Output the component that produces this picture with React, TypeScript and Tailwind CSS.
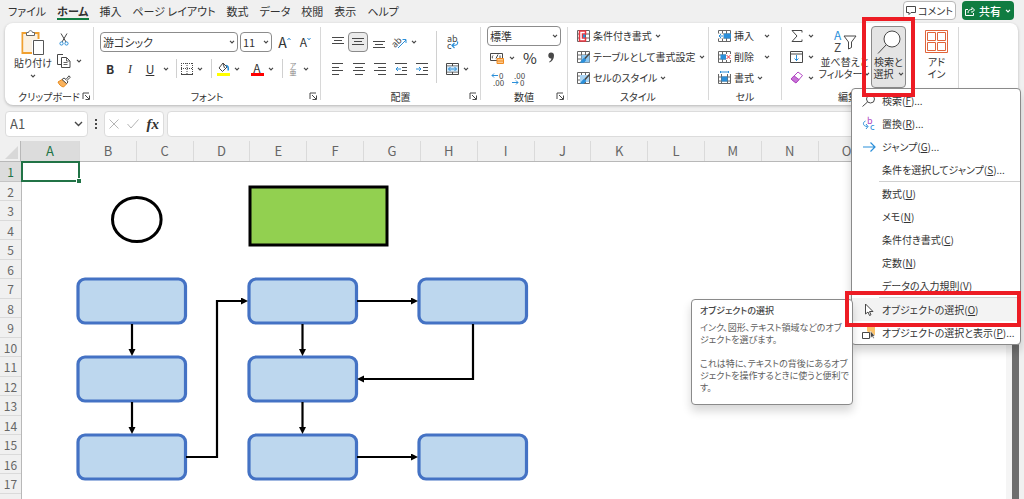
import React from "react";

const DARK = "#484848";
const BLUE = "#2b8fd9";

const COLUMNS = ["B", "C", "D", "E", "F", "G", "H", "I", "J", "K", "L", "M", "N", "O", "P", "Q"];
const ROWS = Array.from({ length: 17 }, (_, i) => i + 1);

const TABS = ["ファイル", "ホーム", "挿入", "ページ レイアウト", "数式", "データ", "校閲", "表示", "ヘルプ"];

interface IconProps {
  w: number;
  h: number;
  box?: string;
  children: React.ReactNode;
}

function Icon({ w, h, box, children }: IconProps) {
  return (
    <svg
      width={w}
      height={h}
      viewBox={box ?? `0 0 ${w} ${h}`}
      fill="none"
      stroke={DARK}
      strokeWidth="1"
      className="shrink-0 overflow-visible"
      aria-hidden="true"
    >
      {children}
    </svg>
  );
}

function Chevron({ color = DARK }: { color?: string }) {
  return (
    <Icon w={6} h={4}>
      <path d="M1 .8l2 2 2-2" stroke={color} strokeWidth="1.2" />
    </Icon>
  );
}

function DropButton({ label, className = "w-[14px]" }: { label: string; className?: string }) {
  return (
    <button aria-label={label} className={`${className} flex h-4 shrink-0 items-center justify-center`}>
      <Chevron />
    </button>
  );
}

function Tool({ label, className = "w-[21px]", children }: { label: string; className?: string; children: React.ReactNode }) {
  return (
    <button aria-label={label} className={`${className} flex h-[19px] shrink-0 items-center justify-center`}>
      {children}
    </button>
  );
}

function SelectBox({ label, value, className }: { label: string; value: string; className: string }) {
  return (
    <div className={`${className} relative flex h-[20px] shrink-0 items-center rounded border border-[#8c8c8c] bg-white`}>
      <select aria-label={label} defaultValue={value} className="h-full w-full appearance-none bg-transparent pl-0.5 text-[11px] leading-4 outline-none">
        <option>{value}</option>
      </select>
      <span className="pointer-events-none absolute right-0.5 flex h-full items-center">
        <Chevron />
      </span>
    </div>
  );
}

function Launcher() {
  return (
    <button aria-label="詳細設定" className="absolute right-[3px] bottom-1">
      <Icon w={8} h={8}>
        <path d="M1 7V1h6M3 3l4 4M7.500 3.500v4h-4" />
      </Icon>
    </button>
  );
}

interface GroupProps {
  name: string;
  className: string;
  launcher?: boolean;
  children: React.ReactNode;
}

function Group({ name, className, launcher, children }: GroupProps) {
  return (
    <>
      <section className={`${className} relative flex shrink-0 flex-col`}>
        <div className="h-[63px]">{children}</div>
        <h2 className="text-center text-[10px] leading-[14px]">{name}</h2>
        {launcher && <Launcher />}
      </section>
      <div className="h-[73px] w-px shrink-0 bg-[#d8d8d8]" />
    </>
  );
}

function Divider({ className = "mx-1 h-[19px]" }: { className?: string }) {
  return <div className={`${className} w-px shrink-0 bg-[#d0d0d0]`} />;
}

function AlignIcon({ lines }: { lines: number[][] }) {
  return (
    <Icon w={12} h={12}>
      {lines.map(([x, y, len]) => (
        <path key={y} d={`M${x} ${y}.5h${len}`} />
      ))}
    </Icon>
  );
}

/* small worksheet used under most of the style / cell icons */
function GridBase() {
  return <path d="M.5.5h12v11H.5zM.5 4h12M.5 8h12M4.500.5v11M8.500.5v11" stroke="#666" />;
}

function ClipboardGroup() {
  return (
    <Group name="クリップボード" className="w-[88px]" launcher>
      <div className="flex pt-[3px] pl-[9px]">
        <button className="flex w-[38px] flex-col items-center text-[10px] leading-[14px] whitespace-nowrap">
          <Icon w={24} h={25}>
            <path d="M5 3H1.500v20H11" stroke="#f0a030" strokeWidth="2" />
            <path d="M2.500 4h14v6H11v12H2.500z" fill="#fbf1e2" stroke="none" />
            <path d="M13 3h4.500v6" stroke="#f0a030" strokeWidth="2" />
            <path d="M5.500 5.500v-3H7.500c.3-2.500 3.700-2.500 4 0h2v3z" fill="#fff" stroke="#666" />
            <path d="M12.500 10.500h10v14h-10z" fill="#fff" stroke="#555" />
          </Icon>
          <span className="mt-px">貼り付け</span>
          <span className="flex h-3 items-center"><Chevron /></span>
        </button>
        <div className="flex flex-col gap-0.5 pl-1">
          <Tool label="切り取り" className="w-[16px]">
            <Icon w={10} h={13}>
              <path d="M2 .5l5 8.500M8 .5L3 9" />
              <circle cx="2.500" cy="10.500" r="1.600" stroke={BLUE} />
              <circle cx="7.500" cy="10.500" r="1.600" stroke={BLUE} />
            </Icon>
          </Tool>
          <div className="flex items-center">
            <Tool label="コピー" className="w-[16px]">
              <Icon w={14} h={14}>
                <path d="M5 10.500H.5V.5H6M4.500 3.500h5l3.500 3.500v6.500H4.500z" fill="#fff" />
                <path d="M9.500 3.500V7H13M6.500 8.500h4M6.500 10.500h4" stroke="#666" />
              </Icon>
            </Tool>
            <DropButton label="コピーのオプション" />
          </div>
          <Tool label="書式のコピー" className="w-[16px]">
            <Icon w={14} h={13}>
              <path d="M1 7l4-2.500 5 4L6.500 12C4 11.500 2 9.500 1 7z" fill="#f9b25c" stroke="#e88a1c" />
              <path d="M5 4.500L7 3l2 1.500L12 .8l1.300 1.400L10 5.500 11 7l-1.500 1.500z" fill="#fff" />
            </Icon>
          </Tool>
        </div>
      </div>
    </Group>
  );
}

function FontGroup() {
  return (
    <Group name="フォント" className="w-[226px]" launcher>
      <div className="flex flex-col gap-[7px] pt-[5px] pl-1.5">
        <div className="flex items-center">
          <SelectBox label="フォント名" value="游ゴシック" className="w-[138px]" />
          <SelectBox label="フォント サイズ" value="11" className="ml-0.5 w-[32px]" />
          <Tool label="フォント サイズの拡大" className="ml-0.5 w-[21px]">
            <span className="text-[14px] leading-4">A</span>
            <Icon w={4} h={10}><path d="M.5 3L2 1.200 3.500 3" stroke={BLUE} /></Icon>
          </Tool>
          <Tool label="フォント サイズの縮小">
            <span className="text-[12px] leading-4">A</span>
            <Icon w={4} h={10}><path d="M.5 1L2 2.800 3.500 1" stroke={BLUE} /></Icon>
          </Tool>
        </div>
        <div className="flex items-center text-[12px] leading-4">
          <Tool label="太字" className="w-[20px]"><b>B</b></Tool>
          <Tool label="斜体" className="w-[20px]"><i className="font-['Liberation_Serif',serif]">I</i></Tool>
          <Tool label="下線" className="w-[20px]"><u>U</u></Tool>
          <DropButton label="下線の種類" className="w-[12px]" />
          <Divider />
          <Tool label="罫線" className="w-[12px]">
            <Icon w={12} h={12}>
              <path d="M.5 0v11M6 0v11M11.500 0v11M0 .5h12M0 5.500h12" strokeDasharray="1 1" />
              <path d="M0 11.500h12" />
            </Icon>
          </Tool>
          <DropButton label="罫線の種類" />
          <Divider />
          <Tool label="塗りつぶしの色" className="w-[14px]">
            <Icon w={13} h={14}>
              <path d="M6 1L2 6l3.500 3.500L10 5z" fill="#fff" />
              <path d="M6 1.500L7.500 6" />
              <path d="M9 3.500c2 0 2.500 2 2.200 5" stroke={BLUE} strokeWidth="1.600" />
              <path d="M0 12.500h13" stroke="#ffff00" strokeWidth="3" />
            </Icon>
          </Tool>
          <DropButton label="塗りつぶしの色を選択" />
          <Tool label="フォントの色" className="ml-1.5 w-[14px]">
            <span className="flex flex-col items-center">
              <span className="h-[11px] text-[12px] leading-[11px]">A</span>
              <span className="h-[3px] w-[13px] bg-[#f00]" />
            </span>
          </Tool>
          <DropButton label="フォントの色を選択" />
          <Divider />
          <Tool label="ふりがな" className="w-[12px]">
            <span className="flex flex-col text-[7px] leading-[7px] text-[#888]"><span>ア</span><span>亜</span></span>
          </Tool>
          <DropButton label="ふりがなの設定" />
        </div>
      </div>
    </Group>
  );
}

function AlignGroup() {
  return (
    <Group name="配置" className="w-[159px]" launcher>
      <div className="flex pl-1.5">
        <div className="flex flex-col gap-[7px] pt-[5px]">
          <div className="flex items-center">
            <Tool label="上揃え"><AlignIcon lines={[[0, 1, 12], [2, 4, 8], [0, 7, 12]]} /></Tool>
            <button aria-label="上下中央揃え" aria-pressed="true" className="flex h-[20px] w-[20px] items-center justify-center rounded border border-[#8a8a8a] bg-[#ebebeb]">
              <AlignIcon lines={[[0, 2, 12], [2, 5, 8], [0, 8, 12]]} />
            </button>
            <Tool label="下揃え"><AlignIcon lines={[[0, 5, 12], [2, 8, 8], [0, 11, 12]]} /></Tool>
            <Tool label="方向">
              <Icon w={14} h={13}>
                <text x="-2" y="9" fontSize="9" fill={DARK} stroke="none" transform="rotate(-45 4 6)">ab</text>
                <path d="M5 12l8-8M9.500 3.500H13V7" stroke={BLUE} />
              </Icon>
            </Tool>
            <DropButton label="方向の設定" className="w-[8px]" />
          </div>
          <div className="flex items-center">
            <Tool label="左揃え"><AlignIcon lines={[[0, 0, 11], [0, 4, 7], [0, 7, 11], [0, 11, 7]]} /></Tool>
            <Tool label="中央揃え"><AlignIcon lines={[[0, 0, 12], [2, 4, 8], [0, 7, 12], [2, 11, 8]]} /></Tool>
            <Tool label="右揃え"><AlignIcon lines={[[0, 0, 12], [4, 4, 8], [0, 7, 12], [4, 11, 8]]} /></Tool>
            <Tool label="インデントを減らす">
              <Icon w={12} h={12}>
                <path d="M0 .5h12M7 4.500h5M7 7.500h5M0 11.500h12" />
                <path d="M6 6H1M3 4L1 6l2 2" stroke={BLUE} />
              </Icon>
            </Tool>
            <Tool label="インデントを増やす">
              <Icon w={12} h={12}>
                <path d="M0 .5h12M7 4.500h5M7 7.500h5M0 11.500h12" />
                <path d="M0 6h5M3 4l2 2-2 2" stroke={BLUE} />
              </Icon>
            </Tool>
          </div>
        </div>
        <Divider className="mt-1 ml-1 h-[52px]" />
        <div className="flex flex-col gap-2 pt-[5px] pl-1.5">
          <Tool label="折り返して全体を表示する" className="w-[18px]">
            <Icon w={13} h={14}>
              <text x="1" y="7" fontSize="9" fill={DARK} stroke="none">ab</text>
              <text x="1" y="14" fontSize="9" fill={DARK} stroke="none">c</text>
              <path d="M11.500 6.500c1 3-1 4-5 4M8.500 8l-2.500 2.500L8.500 13" stroke={BLUE} strokeWidth="1.200" />
            </Icon>
          </Tool>
          <div className="flex items-center">
            <Tool label="セルを結合して中央揃え" className="w-[18px]">
              <Icon w={13} h={12}>
                <path d="M.5.5h12v11H.5zM.5 3h12M.5 9h12M6.500.5V3M6.500 9v2.500" />
                <path d="M1 3.500h11v5H1z" fill="#cfe7f9" stroke="none" />
                <path d="M2.500 6h8M4.500 4l-2 2 2 2M8.500 4l2 2-2 2" stroke={BLUE} />
              </Icon>
            </Tool>
            <DropButton label="結合の設定" className="w-[10px]" />
          </div>
        </div>
      </div>
    </Group>
  );
}

function NumberGroup() {
  return (
    <Group name="数値" className="w-[86px]" launcher>
      <div className="-mt-px flex flex-col pl-1.5">
        <SelectBox label="表示形式" value="標準" className="w-[74px]" />
        <div className="flex h-[23px] items-center">
          <Tool label="通貨表示形式" className="w-[19px]">
            <Icon w={14} h={12}>
              <path d="M.5 1.500h12v7H.5z" />
              <path d="M3 3.500c-1 1-1 2.500 0 3M6 6.500l2-4M10 3.500v3" />
              <path d="M7 6.500h6.500v5H7z" fill="#fdc98a" stroke="#ee8a22" />
              <path d="M7 9h6.500" stroke="#ee8a22" />
            </Icon>
          </Tool>
          <DropButton label="通貨の種類" className="w-[12px]" />
          <Tool label="パーセント スタイル" className="w-[24px]"><span className="text-[15px] leading-4">%</span></Tool>
          <Tool label="桁区切りスタイル" className="w-[18px]">
            <Icon w={8} h={11}>
              <path d="M4 .5c2 0 3 1.200 3 3.200C7 7 5 9.500 2.500 10.500L2 9.800C3.500 9 4.300 7.800 4.400 6.500 2.500 6.800 1.300 5.500 1.300 3.600 1.300 1.800 2.400.5 4 .5z" fill={DARK} stroke="none" />
            </Icon>
          </Tool>
        </div>
        <div className="flex h-[19px] items-center">
          <Tool label="小数点以下の表示桁数を増やす">
            <Icon w={13} h={14}>
              <path d="M7 3.500H1M3 1.500l-2 2 2 2" stroke={BLUE} />
              <text x="8" y="7" fontSize="8" fill={DARK} stroke="none">0</text>
              <text x="2" y="14" fontSize="8" fill={DARK} stroke="none">.00</text>
            </Icon>
          </Tool>
          <Tool label="小数点以下の表示桁数を減らす">
            <Icon w={13} h={14}>
              <text x="2" y="7" fontSize="8" fill={DARK} stroke="none">.00</text>
              <path d="M0 10.500h6M4 8.500l2 2-2 2" stroke={BLUE} />
              <text x="8" y="14" fontSize="8" fill={DARK} stroke="none">0</text>
            </Icon>
          </Tool>
        </div>
      </div>
    </Group>
  );
}

function MenuButton({ icon, label, spread }: { icon: React.ReactNode; label: string; spread?: boolean }) {
  return (
    <button className="flex h-[21px] items-center text-[10px] leading-4 whitespace-nowrap">
      {icon}
      <span className="ml-[3px]">{label}</span>
      <span className={spread ? "ml-2.5" : "ml-[3px]"}><Chevron /></span>
    </button>
  );
}

function StyleGroup() {
  return (
    <Group name="スタイル" className="w-[140px]">
      <div className="-mt-0.5 flex flex-col pl-[9px]">
        <MenuButton
          label="条件付き書式"
          icon={
            <Icon w={13} h={12}>
              <GridBase />
              <path d="M2.500 1h6v3h-3v4h3v3h-6z" fill="#fff" stroke="#e8343f" strokeWidth="1.500" />
              <path d="M6 4.500h2v3H6z" fill={BLUE} stroke="none" />
            </Icon>
          }
        />
        <MenuButton
          label="テーブルとして書式設定"
          icon={
            <Icon w={13} h={12}>
              <GridBase />
              <path d="M4.500 4h8v7.500h-8z" fill="#8cc6f0" stroke="none" />
              <path d="M12.500 2.500L7 8.500" strokeWidth="1.600" />
              <path d="M7.500 7.500c-2 0-2 2.500-4 3.500 2.500 1 5 0 5-2.500z" fill={BLUE} stroke={BLUE} />
            </Icon>
          }
        />
        <MenuButton
          label="セルのスタイル"
          icon={
            <Icon w={13} h={12}>
              <GridBase />
              <path d="M3 3h9v7H3z" fill="#a9d3f2" stroke="none" />
              <path d="M12.500 2.500L7 8.500" strokeWidth="1.600" />
              <path d="M7.500 7.500c-2 0-2 2.500-4 3.500 2.500 1 5 0 5-2.500z" fill={BLUE} stroke={BLUE} />
            </Icon>
          }
        />
      </div>
    </Group>
  );
}

function CellGroup() {
  return (
    <Group name="セル" className="w-[72px]">
      <div className="-mt-0.5 flex flex-col pl-[9px]">
        <MenuButton
          label="挿入"
          spread
          icon={
            <Icon w={13} h={12}>
              <GridBase />
              <path d="M0 3.500h5v5H0z" fill="#fff" stroke="none" />
              <path d="M6 3.500h7v5H6z" fill={BLUE} stroke="none" />
              <path d="M7 6H1M3 4L1 6l2 2" stroke={BLUE} />
            </Icon>
          }
        />
        <MenuButton
          label="削除"
          spread
          icon={
            <Icon w={13} h={12}>
              <GridBase />
              <path d="M2.500 3.500h6v5h-6z" fill={BLUE} stroke="none" />
              <path d="M8 3h5v6H8z" fill="#fff" stroke="none" />
              <path d="M8.500 4l4 4M12.500 4l-4 4" stroke="#e8343f" />
            </Icon>
          }
        />
        <MenuButton
          label="書式"
          icon={
            <Icon w={13} h={13}>
              <path d="M.5 3v9.500h12V3M.5 6h12M.5 10h12M3.500 3v9.500M9.500 3v9.500" stroke="#666" />
              <path d="M3.500 5.500h6v5h-6z" fill={BLUE} stroke="none" />
              <path d="M2.500 1h8M2.500 0v2M10.500 0v2" stroke={BLUE} />
            </Icon>
          }
        />
      </div>
    </Group>
  );
}

function TooltipCard() {
  return (
    <div
      role="tooltip"
      className="absolute top-[210px] right-[167px] h-[106px] w-[162px] rounded border border-[#8a8a8a] bg-white pt-1 pl-2 text-[9px] leading-[12px] whitespace-nowrap text-[#606060] shadow-[0_6px_10px_rgba(0,0,0,0.16)]"
    >
      <p className="mb-1 leading-[14px] font-medium text-[#444]">オブジェクトの選択</p>
      <p>
        インク、図形、テキスト領域などのオブ
        <br />
        ジェクトを選びます。
      </p>
      <p className="mt-3">
        これは特に、テキストの背後にあるオブ
        <br />
        ジェクトを操作するときに使うと便利で
        <br />
        す。
      </p>
    </div>
  );
}

interface MenuEntry {
  label: string;
  accel: string;
  more?: boolean;
  icon?: React.ReactNode;
  lineAbove?: boolean;
  marked?: boolean;
}

const ENTRIES: MenuEntry[] = [
  {
    label: "検索",
    accel: "F",
    more: true,
    icon: <Icon w={14} h={13}><circle cx="8.500" cy="5" r="4" /><path d="M5.500 8L.5 12.500" /></Icon>,
  },
  {
    label: "置換",
    accel: "R",
    more: true,
    icon: (
      <Icon w={14} h={14}>
        <text x="5" y="7" fontSize="9" fill="#b146c2" stroke="none">b</text>
        <text x="8" y="13" fontSize="9" fill={BLUE} stroke="none">c</text>
        <path d="M3.500 4C.5 5 .5 9.500 5.500 9.500M4 7l2 2.500L4 12" stroke={BLUE} />
      </Icon>
    ),
  },
  {
    label: "ジャンプ",
    accel: "G",
    more: true,
    icon: <Icon w={14} h={12}><path d="M1 6h12M8.500 1.500L13 6l-4.500 4.500" stroke={BLUE} strokeWidth="1.200" /></Icon>,
  },
  { label: "条件を選択してジャンプ", accel: "S", more: true },
  { label: "数式", accel: "U", lineAbove: true },
  { label: "メモ", accel: "N" },
  { label: "条件付き書式", accel: "C" },
  { label: "定数", accel: "N" },
  { label: "データの入力規則", accel: "V" },
  {
    label: "オブジェクトの選択",
    accel: "O",
    lineAbove: true,
    marked: true,
    icon: <Icon w={10} h={14}><path d="M1.500 1v10l2.500-2 1.500 3.500 1.500-.7L5.500 8.500H9z" fill="#fff" /></Icon>,
  },
  {
    label: "オブジェクトの選択と表示",
    accel: "P",
    more: true,
    icon: (
      <Icon w={14} h={14}>
        <path d="M5 0h8v9H9L5 5z" fill="#fbc26a" stroke="none" />
        <path d="M.5 6.500h7v6h-7z" fill="#fff" />
        <path d="M8.500 5v7l1.800-1.500 1 2 1-.5-1-2H13z" fill={DARK} stroke="#fff" strokeWidth=".5" />
      </Icon>
    ),
  },
];

function FindMenu() {
  return (
    <div
      role="menu"
      className="absolute top-[61px] left-[-20px] w-[170px] rounded border border-[#8a8a8a] bg-white shadow-[0_6px_10px_rgba(0,0,0,0.18)]"
    >
      {ENTRIES.map((e) => (
        <div key={e.label} className="relative">
          {e.lineAbove && <div className="ml-[27px] h-px bg-[#d0d0d0]" />}
          <button
            role="menuitem"
            className={`flex h-[23px] w-full items-center text-[10px] leading-4 whitespace-nowrap ${e.marked ? "bg-[#f3f3f3]" : ""}`}
          >
            <span className="flex w-[30px] shrink-0 justify-center pl-1">{e.icon}</span>
            <span>
              {e.label}(<u>{e.accel}</u>){e.more && "..."}
            </span>
          </button>
          {e.marked && (
            <div className="pointer-events-none absolute -top-[6px] -right-px -left-[7px] z-10 h-[36px] border-4 border-[#ed1c24]" />
          )}
        </div>
      ))}
      <TooltipCard />
    </div>
  );
}

function EditGroup() {
  return (
    <Group name="編集" className="w-[132px]">
      <div className="flex">
        <div className="-mt-0.5 flex flex-col pl-[7px]">
          <div className="flex h-[21px] items-center">
            <Tool label="オート SUM" className="w-[15px]">
              <Icon w={12} h={12}><path d="M11 2.500V.5H1l5 5.500-5 5.500h10v-2" /></Icon>
            </Tool>
            <DropButton label="集計の種類" />
          </div>
          <div className="flex h-[21px] items-center">
            <Tool label="フィル" className="w-[15px]">
              <Icon w={13} h={12}>
                <path d="M.5.5h12v11H.5zM.5 3h12" />
                <path d="M6.500 4v6M4.500 7.500l2 2 2-2" stroke={BLUE} />
              </Icon>
            </Tool>
            <DropButton label="フィルの種類" />
          </div>
          <div className="flex h-[21px] items-center">
            <Tool label="クリア" className="w-[15px]">
              <Icon w={13} h={13}>
                <path d="M8 1l4.500 3.500L6 12 1 8z" fill="#fff" stroke="#b146c2" />
                <path d="M4 4.800L9 8.600 6 12 1 8z" fill="#c774d6" stroke="#b146c2" />
              </Icon>
            </Tool>
            <DropButton label="クリアの種類" />
          </div>
        </div>
        <button className="flex w-[53px] flex-col items-center pt-[3px] text-[10px] leading-[12px] whitespace-nowrap">
          <Icon w={24} h={24}>
            <text x="1" y="10" fontSize="12" fill={BLUE} stroke="none">A</text>
            <text x="1" y="22" fontSize="12" fill={DARK} stroke="none">Z</text>
            <path d="M11 6h12l-4.500 6v5.500l-3 1.500v-7z" />
          </Icon>
          <span className="mt-0.5">並べ替えと</span>
          <span className="flex items-center gap-0.5">フィルター<Chevron /></span>
        </button>
        <div className="relative">
          <button aria-haspopup="menu" aria-expanded="true" className="-mt-px flex h-[62px] w-[35px] flex-col items-center rounded border border-[#8a8a8a] bg-[#e4e4e4] pt-[3px] text-[10px] leading-[12px] whitespace-nowrap">
            <Icon w={24} h={24}>
              <circle cx="15" cy="9" r="8" fill="#fff" />
              <path d="M9.300 14.700L1 23.500" />
            </Icon>
            <span className="mt-0.5">検索と</span>
            <span className="flex items-center gap-1">選択<Chevron /></span>
          </button>
          <FindMenu />
          <div className="pointer-events-none absolute -top-[10px] -left-[9px] h-[80px] w-[53px] border-4 border-[#ed1c24]" />
        </div>
      </div>
    </Group>
  );
}

function AddinGroup() {
  return (
    <Group name="" className="w-[43px]">
      <button className="flex w-full flex-col items-center pt-[3px] text-[10px] leading-[12px]">
        <Icon w={23} h={23}>
          <path d="M.5.5h22v22H.5z" stroke="#e0643a" />
          <path d="M2.500 2.500h8v8h-8zM12.500 2.500h8v8h-8zM2.500 12.500h8v8h-8zM12.500 12.500h8v8h-8z" stroke="#e0643a" />
        </Icon>
        <span className="mt-[3px]">アド</span>
        <span>イン</span>
      </button>
    </Group>
  );
}

function TabBar() {
  return (
    <header className="flex h-[23px] items-start pr-2.5 pl-2">
      <nav className="flex h-[20px] gap-[11px]">
        {TABS.map((tab) => (
          <button
            key={tab}
            className={`border-b-2 pt-1 text-[11px] leading-[14px] whitespace-nowrap ${
              tab === "ホーム" ? "border-[#107c41] font-bold" : "border-transparent"
            }`}
          >
            {tab}
          </button>
        ))}
      </nav>
      <div className="ml-auto flex gap-1.5 pt-px">
        <button className="flex h-[19px] w-[53px] items-center justify-center gap-0.5 rounded border border-[#b8b8b8] bg-white text-[10px] leading-4 whitespace-nowrap">
          <Icon w={10} h={9}><path d="M.5.5h9v6H5l-2 2v-2H.5z" /></Icon>
          コメント
        </button>
        <button className="flex h-[19px] w-[52px] items-center justify-center gap-1 rounded bg-[#107c41] text-[11px] leading-4 font-medium text-white">
          <Icon w={10} h={10}>
            <path d="M3 3.500H.5v6h8V7M3 7c0-3 2-3.500 4-3.500V1.500L9.500 4 7 6.500v-1.500" stroke="#fff" />
          </Icon>
          共有
          <Chevron color="#fff" />
        </button>
      </div>
    </header>
  );
}

function FormulaBar() {
  return (
    <div className="mt-1.5 flex h-[26px] pr-1.5 pl-[5px]">
      <div className="relative flex w-[83px] items-center rounded border border-[#dcdcdc] bg-white">
        <input aria-label="名前ボックス" defaultValue="A1" className="w-full bg-transparent pl-1 text-[13px] leading-4 text-[#555] outline-none" />
        <span className="pointer-events-none absolute right-1">
          <Icon w={9} h={6}><path d="M1 1l3.500 3.500L8 1" strokeWidth="1.400" /></Icon>
        </span>
      </div>
      <div className="flex w-[16px] items-center justify-center">
        <Icon w={2} h={10}><path d="M1 0v2M1 4v2M1 8v2" strokeWidth="2" /></Icon>
      </div>
      <div className="flex w-[60px] items-center justify-around rounded border border-[#dcdcdc] bg-white">
        <button aria-label="キャンセル"><Icon w={10} h={10}><path d="M.5.5l9 9M9.500.5l-9 9" stroke="#b5b5b5" /></Icon></button>
        <button aria-label="入力"><Icon w={12} h={10}><path d="M.5 5l3.500 4L11.500.5" stroke="#b5b5b5" /></Icon></button>
        <button aria-label="関数の挿入" className="font-['Liberation_Serif',serif] text-[15px] leading-4 font-bold italic">fx</button>
      </div>
      <input aria-label="数式バー" className="ml-[3px] min-w-0 flex-1 rounded border border-[#dcdcdc] bg-white px-2 text-[12px] outline-none" />
    </div>
  );
}

const NODES = [
  [78, 117],
  [78, 195],
  [78, 273],
  [249, 117],
  [249, 195],
  [249, 273],
  [419, 117],
  [419, 273],
];

const CONNECTORS = [
  "M132 162V190",
  "M132 240V268",
  "M186 295H217V139H244",
  "M302.500 162V190",
  "M302.500 240V268",
  "M357 139H414",
  "M473 162V217H361",
  "M357 295H414",
];

/* shapes are placed in sheet coordinates, origin at the top left of row 1 and the row headers */
function Drawing() {
  return (
    <svg width="560" height="337" className="absolute top-0 left-0" aria-label="フローチャート">
      <defs>
        <marker id="arrow" markerWidth="8" markerHeight="8" refX="3" refY="3.500" orient="auto" markerUnits="userSpaceOnUse">
          <path d="M0 0L7 3.500 0 7z" />
        </marker>
      </defs>
      <ellipse cx="136.800" cy="57.500" rx="24.300" ry="22" fill="#fff" stroke="#000" strokeWidth="3" />
      <rect x="250" y="25" width="137" height="58" fill="#92d050" stroke="#000" strokeWidth="3" />
      {NODES.map(([x, y]) => (
        <rect key={`${x}-${y}`} x={x} y={y} width="107.500" height="44" rx="7" fill="#bdd7ee" stroke="#4472c4" strokeWidth="3.200" />
      ))}
      {CONNECTORS.map((d) => (
        <path key={d} d={d} fill="none" stroke="#000" strokeWidth="2.200" markerEnd="url(#arrow)" />
      ))}
    </svg>
  );
}

function Sheet() {
  return (
    <main className="mt-1 flex min-h-0 flex-1">
      <div className="flex min-w-0 flex-1 flex-col">
        <div className="flex h-[21px] shrink-0 border-b border-[#b8b8b8]">
          <button aria-label="すべて選択" className="flex w-[21px] items-end justify-end border-r border-[#b8b8b8] p-0.5">
            <Icon w={13} h={13}><path d="M13 0v13H0z" fill="#d8d8d8" stroke="none" /></Icon>
          </button>
          <div className="grid flex-1 grid-cols-[58px_repeat(16,minmax(0,1fr))_18px] text-center text-[13px] leading-[20px] text-[#666]">
            <div className="bg-[#dcdcdc] text-[#217346]">A</div>
            {COLUMNS.map((c) => (
              <div key={c} className="border-l border-[#dadada]">{c}</div>
            ))}
          </div>
        </div>
        <div className="relative flex min-h-0 flex-1 bg-white">
          <div className="grid w-[22px] shrink-0 auto-rows-[20px_19px] content-start border-r border-[#b8b8b8] bg-[#f0f0f0] text-center text-[12px] leading-[19px] text-[#666]">
            {ROWS.map((r) => (
              <div key={r} className={r === 1 ? "border-b border-[#c4c4c4] bg-[#dcdcdc] text-[#217346]" : "border-b border-[#dadada]"}>
                {r}
              </div>
            ))}
          </div>
          <Drawing />
          <div className="absolute -top-px left-[21px] h-[21px] w-[59px] border-2 border-[#217346]">
            <div className="absolute -right-[3px] -bottom-[3px] h-[5px] w-[5px] border-t border-l border-white bg-[#217346]" />
          </div>
        </div>
      </div>
      <div className="flex w-[18px] shrink-0 bg-[#f0f0f0]">
        <div className="w-1.5 bg-[#f5f5f5]" />
        <div className="w-[7px] bg-[#6e6e6e]" />
      </div>
    </main>
  );
}

export default function App() {
  return (
    <div className="flex h-screen flex-col overflow-hidden bg-[#f0f0f0] font-['Noto_Sans_CJK_JP',sans-serif] text-[#333] [font-feature-settings:'palt']">
      <TabBar />
      <div className="relative z-10 mr-1.5 ml-[5px] flex shrink-0 rounded-lg bg-white pt-1 pb-px shadow-[0_1px_3px_rgba(0,0,0,0.25)]">
        <ClipboardGroup />
        <FontGroup />
        <AlignGroup />
        <NumberGroup />
        <StyleGroup />
        <CellGroup />
        <EditGroup />
        <AddinGroup />
      </div>
      <FormulaBar />
      <Sheet />
    </div>
  );
}
